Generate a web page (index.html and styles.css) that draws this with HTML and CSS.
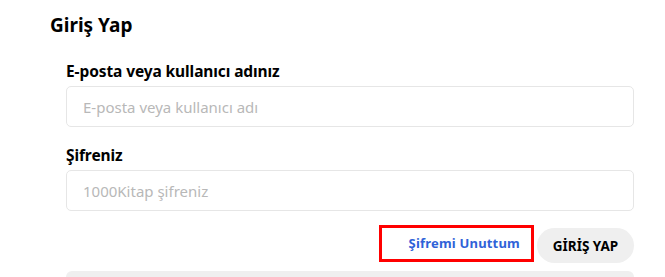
FILE: index.html
```html
<!DOCTYPE html>
<html lang="tr">
<head>
	<meta charset="utf-8">
	<title>Giriş Yap</title>
	<link rel="stylesheet" href="styles.css">
</head>
<body>
<div class="page">
	<h1 class="title">Giriş Yap</h1>

	<form class="login">
		<div class="field">
			<label for="user">E-posta veya kullanıcı adınız</label>
			<input id="user" type="text" placeholder="E-posta veya kullanıcı adı">
		</div>

		<div class="field">
			<label for="pass">Şifreniz</label>
			<input id="pass" type="password" placeholder="1000Kitap şifreniz">
		</div>

		<div class="actions">
			<a class="forgot" href="#">Şifremi Unuttum</a>
			<button class="submit" type="button">GİRİŞ YAP</button>
		</div>

		<div class="more"></div>
	</form>
</div>
</body>
</html>
```

FILE: styles.css
```css
/* Reset */

* { margin: 0; padding: 0; box-sizing: border-box; }

body {
	background-color: white;
	font-family: "Noto Sans", "Open Sans", sans-serif;
	color: black;
	overflow: hidden;
}


/* Page */

.page {
	padding-left: 50px;
	padding-top: 12px;
}

.title {
	font-size: 19px;
	font-weight: 700;
	line-height: 26px;
}


/* Form */

.login {
	width: 584px;
	padding-left: 16px;
	margin-top: 23px;
}

.field {
	margin-bottom: 18px;
}

.field label {
	display: block;
	font-size: 15.5px;
	font-weight: 700;
	line-height: 20px;
	margin-bottom: 5px;
	letter-spacing: -0.1px;
}

.field input {
	display: block;
	width: 100%;
	height: 41px;
	border: 1px solid #e6e6e6;
	border-radius: 5px;
	padding: 0 16px;
	font-family: inherit;
	font-size: 15px;
	color: #333;
	outline: none;
}

.field input::placeholder {
	color: #b8b8b8;
}


/* Buttons */

.actions {
	display: flex;
	justify-content: flex-end;
	align-items: flex-start;
	gap: 3px;
	margin-top: -4px;
}

.forgot {
	display: block;
	width: 155px;
	height: 37px;
	border: 3px solid #ff0000;
	padding-right: 11px;
	text-align: right;
	line-height: 31px;
	font-size: 13px;
	font-weight: 700;
	color: #2f62d8;
	text-decoration: none;
	letter-spacing: 0.2px;
}

.submit {
	height: 35px;
	width: 97px;
	border: none;
	border-radius: 18px;
	background-color: #efefef;
	font-family: inherit;
	font-size: 13.5px;
	font-weight: 700;
	color: black;
	margin-top: 3px;
}

.more {
	height: 40px;
	margin-top: 8px;
	background-color: #efefef;
	border-radius: 6px;
}
```
